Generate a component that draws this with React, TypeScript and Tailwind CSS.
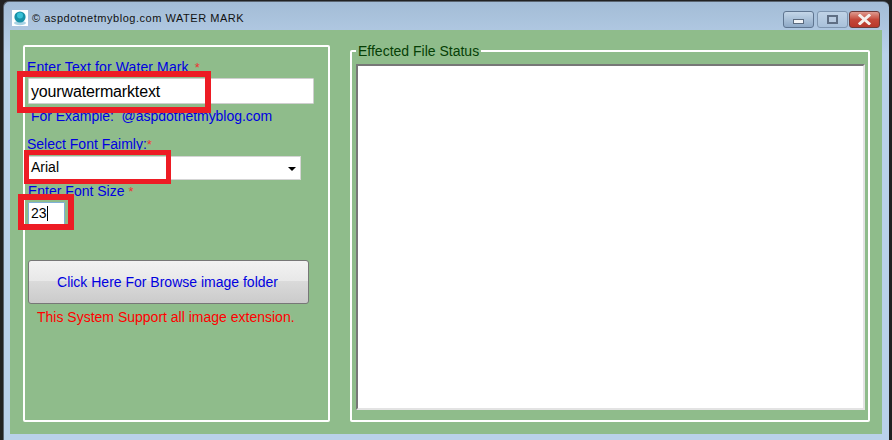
const F = "font-['Liberation_Sans',Arial,sans-serif]";

function RedBox({ c }: { c: string }) {
  return <div className={`absolute border-[#ed1c24] ${c}`} />;
}

export default function App() {
  return (
    <div className={`relative w-[892px] h-[440px] overflow-hidden bg-[#222] ${F}`}>
      <div className="ml-[3px] mt-[1px] h-[439px] w-[886px] rounded-t-[6px] border-t border-l border-[#5a6470] bg-gradient-to-b from-[#a3bcd6] to-[#b9d1ea] to-[12%] flex flex-col">
        {/* title bar */}
        <div className="h-[28px] flex items-start shrink-0 pl-[8px] pr-[9px]">
          <div className="mt-[8px] w-[16px] h-[16px] bg-white flex items-center justify-center">
            <svg width="16" height="16" viewBox="0 0 16 16">
              <ellipse cx="8" cy="13" rx="6" ry="2.2" fill="#a9d3e4" />
              <circle cx="8" cy="7" r="5.6" fill="#1791a8" />
              <circle cx="8" cy="5.5" r="3" fill="#37c0d6" />
            </svg>
          </div>
          <span className="ml-[4px] mt-[10px] text-[11px] leading-[13px] text-[#111] tracking-[0.53px]">
            © aspdotnetmyblog.com WATER MARK
          </span>
          <div className="ml-auto mt-[9px] flex">
            <div className="w-[31px] h-[17px] rounded-[3px] border border-[#5f7590] bg-gradient-to-b from-[#c4d6e8] via-[#a9c0d8] to-[#8fa9c6] flex items-center justify-center">
              <div className="w-[11px] h-[5px] mt-[3px] bg-[#f2f4f7] border border-[#5a6a7e]" />
            </div>
            <div className="ml-[3px] w-[31px] h-[17px] rounded-[3px] border border-[#7f96b0] bg-gradient-to-b from-[#c0d3e6] to-[#a9c1da] flex items-center justify-center">
              <div className="w-[11px] h-[9px] border-2 border-[#5f6f84] bg-[#b8cbe0]" />
            </div>
            <div className="ml-[1px] w-[31px] h-[17px] rounded-[3px] border border-[#6d3a38] bg-gradient-to-b from-[#dd9a90] via-[#c4483a] to-[#b9382c] flex items-center justify-center">
              <svg width="13" height="11" viewBox="0 0 13 11">
                <path d="M2 1.5 L11 9.5 M11 1.5 L2 9.5" stroke="#f4f1ee" strokeWidth="3" strokeLinecap="square" />
              </svg>
            </div>
          </div>
        </div>
        {/* client */}
        <div className="relative ml-[6px] w-[872px] h-[404px] bg-[#8fbc8b] flex items-start gap-[20px] pl-[13px] pt-[15px]">
          {/* left group */}
          <div className="w-[307px] h-[377px] shrink-0 rounded-[2px] border-2 border-white pt-[12px] pl-[3px] text-[14px] text-[#0000e0]">
            <div className="h-[16px] leading-[16px] -ml-[1px] tracking-[0.12px]">
              Enter Text for Water Mark <span className="text-[#e33] text-[13px] leading-[0] ml-[2px]">*</span>
            </div>
            <div className="mt-[3px] w-[286px] h-[26px] bg-white border border-[#cfcfcf] rounded-[1px] pl-[2px] text-[16px] leading-[25px] tracking-[-0.15px] text-black">
              yourwatermarktext
            </div>
            <div className="mt-[4px] ml-[3px] h-[16px] leading-[16px] whitespace-pre tracking-[-0.03px]">{"For Example:  @aspdotnetmyblog.com"}</div>
            <div className="mt-[12px] -ml-[1px] h-[16px] leading-[16px]">
              Select Font Faimly:<span className="text-[#e33] text-[13px] leading-[0]">*</span>
            </div>
            <div className="mt-[4px] w-[273px] h-[24px] bg-white border border-[#d5d5d5] flex items-center pl-[2px] text-[14px] text-black">
              <span className="flex-1 leading-[16px] mb-[2px]">Arial</span>
              <div className="mr-[4px] w-0 h-0 border-x-[4px] border-x-transparent border-t-[4px] border-t-black mt-[2px]" />
            </div>
            <div className="mt-[3px] h-[16px] leading-[16px]">
              Enter Font Size <span className="text-[#e33] text-[13px] leading-[0]">*</span>
            </div>
            <div className="mt-[3px] w-[37px] h-[23px] bg-white border border-[#7fb0d8] rounded-[1px] pl-[2px] text-[14px] leading-[21px] text-black">
              23<span className="inline-block w-px h-[15px] bg-black align-[-3px]" />
            </div>
            <button className="block mt-[35px] w-[281px] h-[44px] pr-[2px] rounded-[3px] border border-[#777] bg-[linear-gradient(#f2f2f2_0,#e8e8e8_47%,#dadada_48%,#cbcbcb_100%)] text-[14px] text-[#0000e0]">
              Click Here For Browse image folder
            </button>
            <div className="mt-[5px] ml-[9px] leading-[16px] text-[#f00]">This System Support all image extension.</div>
          </div>
          {/* right group */}
          <div className="relative mt-[5px] w-[520px] h-[372px] shrink-0 rounded-[2px] border-2 border-white pt-[12px] pl-[4px]">
            <span className="absolute -top-[9px] left-[4px] bg-[#8fbc8b] px-[2px] text-[14px] leading-[16px] text-[#063f06]">
              Effected File Status
            </span>
            <div className="w-[509px] h-[346px] bg-white border-t-2 border-l-2 border-t-[#777] border-l-[#777] border-r-2 border-b-2 border-r-[#e3e3e3] border-b-[#e3e3e3]" />
          </div>
          <RedBox c="border-[6px] left-[7px] top-[41px] w-[194px] h-[42px]" />
          <RedBox c="border-[5px] left-[14px] top-[120px] w-[147px] h-[34px]" />
          <RedBox c="border-[6px] left-[8px] top-[164px] w-[56px] h-[36px]" />
        </div>
      </div>
    </div>
  );
}
